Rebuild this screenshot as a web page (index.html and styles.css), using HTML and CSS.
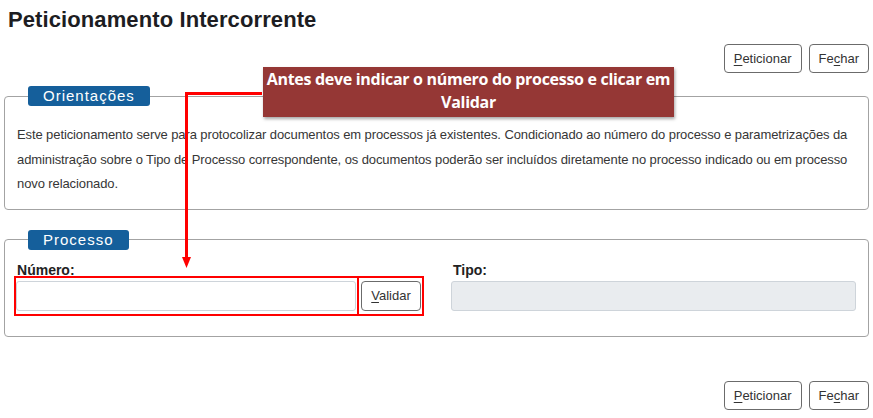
FILE: index.html
```html
<!DOCTYPE html>
<html lang="pt-BR">
<head>
<meta charset="utf-8">
<title>Peticionamento Intercorrente</title>
<link rel="stylesheet" href="styles.css">
</head>
<body>
<div class="page">
  <h1 class="title">Peticionamento Intercorrente</h1>
  <div class="actions">
    <button class="btn"><u>P</u>eticionar</button>
    <button class="btn">Fe<u>c</u>har</button>
  </div>

  <fieldset class="box box-orient">
    <legend class="legend">Orientações</legend>
    <p class="text">Este peticionamento serve para protocolizar documentos em processos já existentes. Condicionado ao número do processo e parametrizações da administração sobre o Tipo de Processo correspondente, os documentos poderão ser incluídos diretamente no processo indicado ou em processo novo relacionado.</p>
  </fieldset>

  <fieldset class="box box-proc">
    <legend class="legend">Processo</legend>
    <div class="fields">
      <div class="field">
        <label class="label"><u>N</u>úmero:</label>
        <div class="group">
          <input class="input" type="text">
          <button class="btn btn-val"><u>V</u>alidar</button>
          <div class="mark"><span class="mark-div"></span></div>
        </div>
      </div>
      <div class="field field-right">
        <label class="label">Tipo:</label>
        <input class="input input-dis" type="text" disabled>
      </div>
    </div>
  </fieldset>

  <div class="actions actions-bottom">
    <button class="btn"><u>P</u>eticionar</button>
    <button class="btn">Fe<u>c</u>har</button>
  </div>

  <svg class="arrow" width="90" height="200" viewBox="0 0 90 200">
    <path d="M80 14.5 H4.5 V182" fill="none" stroke="#ff0000" stroke-width="3"/>
    <path d="M0 178 L4.5 189 L9 178 Z" fill="#ff0000"/>
  </svg>
  <div class="callout">Antes deve indicar o número do processo e clicar em<br>Validar</div>
</div>
</body>
</html>
```

FILE: styles.css
```css
* { box-sizing: border-box; }
html, body { margin: 0; padding: 0; background: #fff; }
body {
  font-family: "Liberation Sans", Arial, sans-serif;
  color: #333;
  font-size: 13px;
}
.page {
  position: relative;
  width: 873px;
  padding: 0 4px;
}
.title {
  margin: 0;
  padding: 6px 0 0 4px;
  font-size: 22px;
  line-height: 27px;
  font-weight: bold;
  letter-spacing: 0.1px;
  color: #1d1d22;
}
.actions {
  display: flex;
  justify-content: flex-end;
  gap: 7px;
  padding-right: 0;
  margin-top: 11px;
}
.btn {
  height: 29px;
  padding: 0 9px;
  background: #fff;
  border: 1px solid #6b6b6b;
  border-radius: 4px;
  font-family: "Liberation Sans", Arial, sans-serif;
  font-size: 13px;
  color: #333;
}
.btn u { text-decoration-thickness: 1px; text-underline-offset: 2px; }
.box {
  margin: 13px 0 0;
  padding: 0 12px 12px;
  border: 1px solid #a3a3a3;
  border-radius: 4px;
  min-width: 0;
}
.box-proc { margin-top: 20px; padding-bottom: 25px; }
.legend {
  margin-left: 11px;
  padding: 0 15px;
  height: 20px;
  line-height: 20px;
  background: #155f9b;
  color: #fff;
  font-size: 15px;
  letter-spacing: 1px;
  border-radius: 3px;
}
.text {
  margin: 17px 0 0;
  line-height: 24.5px;
  font-size: 13px;
  letter-spacing: -0.1px;
  color: #363636;
}
.fields {
  display: grid;
  grid-template-columns: 419px 1fr;
  margin-top: 11px;
}
.field { display: flex; flex-direction: column; align-items: flex-start; }
.field-right { padding-left: 17px; }
.label {
  font-weight: bold;
  font-size: 14px;
  line-height: 18px;
  color: #222;
  margin-bottom: 2px;
}
.group {
  position: relative;
  display: flex;
  gap: 5px;
  margin-left: -1px;
}
.input {
  width: 340px;
  height: 30px;
  border: 1px solid #ced4da;
  border-radius: 3px;
  background: #fff;
  font-size: 13px;
}
.input-dis { width: 405px; background: #e9ecef; margin-left: -2px; }
.btn-val { height: 30px; width: 60px; padding: 0; }
.mark {
  position: absolute;
  left: -2px;
  top: -5px;
  width: 410px;
  height: 40px;
  border: 2px solid #ff0000;
  pointer-events: none;
}
.mark-div {
  position: absolute;
  left: 341px;
  top: 0;
  bottom: 0;
  width: 2px;
  background: #ff0000;
}
.actions-bottom { margin-top: 44px; }
.arrow {
  position: absolute;
  left: 182px;
  top: 79px;
}
.callout {
  position: absolute;
  left: 263px;
  top: 67px;
  width: 411px;
  height: 50px;
  background: #953735;
  color: #fff;
  font-family: "Open Sans", sans-serif;
  font-weight: 700;
  font-size: 16px;
  letter-spacing: -0.3px;
  line-height: 23px;
  text-align: center;
  padding-top: 1px;
  box-shadow: 1px 2px 3px rgba(0,0,0,0.35);
}
```
